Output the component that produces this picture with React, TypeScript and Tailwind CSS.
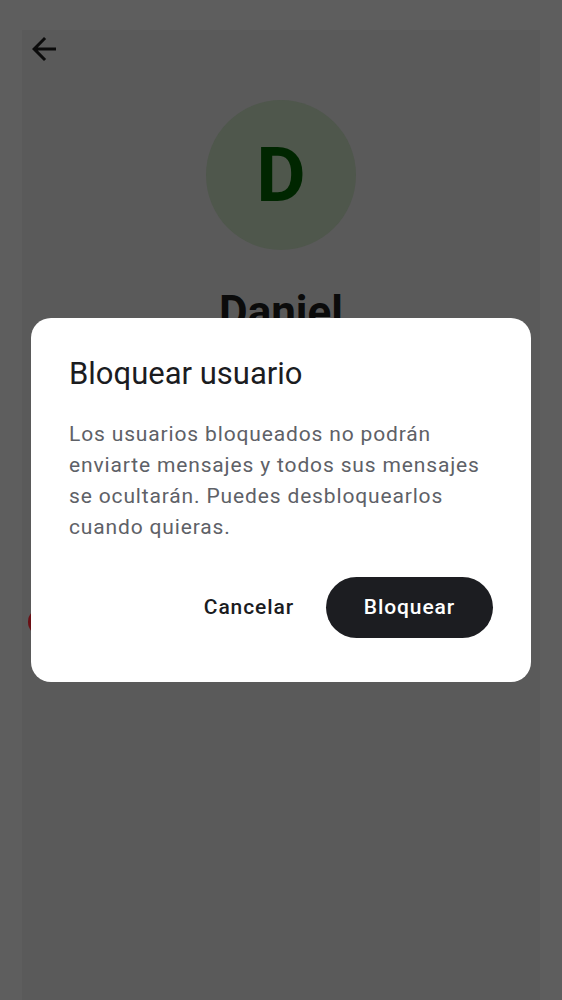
import React from 'react'

const font = { fontFamily: 'Roboto, "Noto Sans", sans-serif' }

const BackArrow: React.FC = () => (
  <svg width="36" height="36" viewBox="0 0 24 24" fill="#0b0b0b" aria-hidden>
    <path d="M20 11H7.83l5.59-5.59L12 4l-8 8 8 8 1.41-1.41L7.83 13H20v-2z" />
  </svg>
)

const BlockDialog: React.FC = () => (
  <div className="absolute left-[31px] top-[318px] w-[500px] rounded-[20px] bg-white px-[38px] pb-[44px] pt-[36px]">
    <h2 className="text-[31px] leading-[40px] text-[#1b1c1f]">Bloquear usuario</h2>
    <p className="mt-[25px] text-[21px] leading-[31px] tracking-[0.85px] text-[#5e6167]">
      Los usuarios bloqueados no podrán enviarte mensajes y todos sus mensajes se ocultarán. Puedes desbloquearlos
      cuando quieras.
    </p>
    <div className="mt-[34px] flex items-center justify-end gap-[8px]">
      <button type="button" className="h-[61px] px-[24px] text-[21px] font-medium tracking-[0.9px] text-[#1b1c1f]">
        Cancelar
      </button>
      <button
        type="button"
        className="h-[61px] w-[167px] rounded-full bg-[#1c1d21] text-[21px] font-medium tracking-[0.9px] text-white"
      >
        Bloquear
      </button>
    </div>
  </div>
)

export default function App() {
  return (
    <div className="relative h-[1000px] w-[562px] overflow-hidden bg-[#5e5e5e]" style={font}>
      <div className="ml-[22px] mr-[22px] mt-[30px] h-[970px] bg-[#5a5a5a]">
        <div className="pl-[4px] pt-[1px]">
          <BackArrow />
        </div>
        <div className="mt-[33px] flex flex-col items-center">
          <div className="flex h-[150px] w-[150px] items-center justify-center rounded-full bg-[#4f574c]">
            <span className="text-[76px] font-bold leading-none text-[#002600]">D</span>
          </div>
          <h1 className="mt-[36px] text-[44px] font-bold leading-[52px] text-[#0b0b0b]">Daniel</h1>
        </div>
      </div>
      <div className="absolute left-[28px] top-[608px] h-[28px] w-[28px] rounded-full bg-[#6a0f14]" />
      <BlockDialog />
    </div>
  )
}
